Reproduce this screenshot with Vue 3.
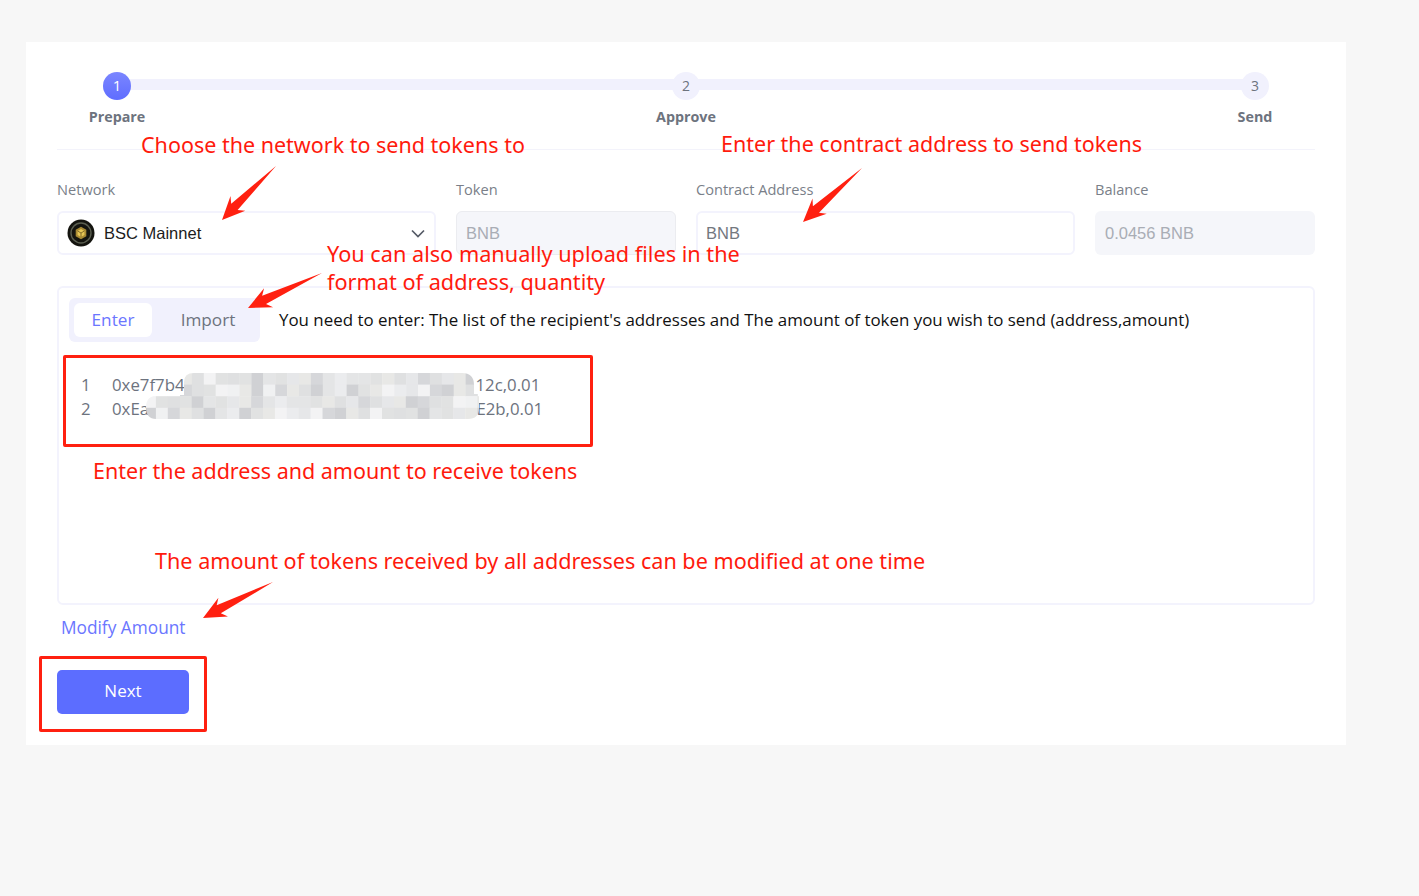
<script setup>
const steps = [
  { n: 1, label: 'Prepare', active: true },
  { n: 2, label: 'Approve' },
  { n: 3, label: 'Send' }
]

function arrow(x1, y1, x2, y2) {
  const dx = x2 - x1, dy = y2 - y1, len = Math.hypot(dx, dy)
  const ux = dx / len, uy = dy / len, nx = -uy, ny = ux
  const pt = (t, w) => `${(x1 + ux * t + nx * w).toFixed(1)},${(y1 + uy * t + ny * w).toFixed(1)}`
  const h = len - 22
  return [pt(0, 0), pt(h + 4, 5), pt(h - 1, 11), pt(len, 0), pt(h - 1, -10), pt(h + 4, -4)].join(' ')
}
const arrows = [
  arrow(276, 166, 222, 220),
  arrow(862, 168, 803, 222),
  arrow(322, 273, 248, 308),
  arrow(273, 582, 203, 618)
]

const shades = ['#ebecee', '#e4e5e6', '#f0f1f2', '#d6d7da', '#e8e8e6', '#dfe0e1', '#f3f3f4', '#d0d1d4', '#e6e7e9', '#e1e2e2']
const cells = []
let seed = 7
for (let r = 0; r < 4; r++) {
  const from = r < 2 ? 180 : 144
  const to = r < 2 ? 476 : 482
  for (let x = from; x < to; x += 11.9) {
    seed = (seed * 31 + 11) % 97
    cells.push({ x, y: 373 + r * 11.6, fill: shades[seed % shades.length] })
  }
}
</script>

<template>
  <div class="page">
    <main class="card">
      <div class="steps">
        <div class="track"></div>
        <div v-for="s in steps" :key="s.n" class="step">
          <span class="dot" :class="{ on: s.active }">{{ s.n }}</span>
          <span class="step-label">{{ s.label }}</span>
        </div>
      </div>

      <div class="fields">
        <div class="field">
          <label>Network</label>
          <div class="box select">
            <svg class="coin" width="28" height="28" viewBox="0 0 28 28">
              <circle cx="14" cy="14" r="13.500" fill="#14140f" />
              <circle cx="14" cy="14" r="10" fill="none" stroke="#5a5e50" stroke-width="1.400" />
              <path d="M14 7.800l5.300 3v6.400L14 20.200l-5.300-3v-6.400z" fill="#a88a33" />
              <path d="M14 10l3.400 2v4L14 18l-3.400-2v-4z" fill="#e6c655" />
              <path d="M14 14v4M10.600 12l3.400 2 3.400-2" fill="none" stroke="#6b5720" stroke-width="0.800" />
            </svg>
            <span class="select-text">BSC Mainnet</span>
            <svg class="chev" width="14" height="9" viewBox="0 0 14 9">
              <path d="M1 1.500l6 6 6-6" fill="none" stroke="#555b66" stroke-width="1.700" />
            </svg>
          </div>
        </div>
        <div class="field">
          <label>Token</label>
          <div class="box disabled bordered">BNB</div>
        </div>
        <div class="field">
          <label>Contract Address</label>
          <div class="box plain">BNB</div>
        </div>
        <div class="field">
          <label>Balance</label>
          <div class="box disabled">0.0456 BNB</div>
        </div>
      </div>

      <section class="panel">
        <div class="panel-head">
          <div class="tabs">
            <span class="tab on">Enter</span>
            <span class="tab">Import</span>
          </div>
          <p class="hint">You need to enter: The list of the recipient's addresses and The amount of token you wish to send (address,amount)</p>
        </div>
        <div class="editor">
          <div class="line"><span class="num">1</span><span class="code">0xe7f7b4<span class="gap1"></span>12c,0.01</span></div>
          <div class="line"><span class="num">2</span><span class="code">0xEa.<span class="gap2"></span>E2b,0.01</span></div>
        </div>
      </section>

      <a class="modify">Modify Amount</a>
      <button class="next" type="button">Next</button>
    </main>

    <svg class="mosaic" width="1419" height="896" viewBox="0 0 1419 896">
      <defs>
        <clipPath id="blur-shape">
          <path d="M194 373H462Q474 373 474 385V394H479V408Q479 419 468 419H156Q146 419 146 407Q146 396 158 395H184V382Q184 373 194 373Z" />
        </clipPath>
      </defs>
      <g clip-path="url(#blur-shape)">
        <rect v-for="(c, i) in cells" :key="i" :x="c.x" :y="c.y" width="12.200" height="12" :fill="c.fill" />
      </g>
      <polygon v-for="(p, i) in arrows" :key="'a' + i" :points="p" fill="#ff2010" />
    </svg>

    <div class="frame frame-a"></div>
    <div class="frame frame-b"></div>

    <span class="note n1">Choose the network to send tokens to</span>
    <span class="note n2">Enter the contract address to send tokens</span>
    <span class="note n3">You can also manually upload files in the<br />format of address, quantity</span>
    <span class="note n4">Enter the address and amount to receive tokens</span>
    <span class="note n5">The amount of tokens received by all addresses can be modified at one time</span>
  </div>
</template>

<style>
html, body { margin: 0; background: #f7f7f7; }
</style>

<style scoped>
.page {
  position: relative;
  height: 896px;
  padding: 42px 73px 0 26px;
  box-sizing: border-box;
  font-family: "Open Sans", "Noto Sans", sans-serif;
  overflow: hidden;
}
.card {
  background: #fff;
  height: 703px;
  padding: 30px 31px 0;
  box-sizing: border-box;
}
.steps {
  position: relative;
  display: flex;
  justify-content: space-between;
  padding-bottom: 22px;
  border-bottom: 1px solid #f3f3fb;
  margin-bottom: 30px;
}
.track {
  position: absolute;
  left: 60px;
  right: 60px;
  top: 7px;
  height: 11px;
  background: #f1f1fd;
}
.step {
  position: relative;
  width: 120px;
  display: flex;
  flex-direction: column;
  align-items: center;
}
.dot {
  width: 28px;
  height: 28px;
  border-radius: 50%;
  background: #f1f1fd;
  color: #6d737e;
  font-size: 14px;
  line-height: 27px;
  text-align: center;
}
.dot.on {
  background: linear-gradient(180deg, #7b86ff, #5f6dff);
  color: #fff;
  font-size: 15px;
}
.step-label {
  margin-top: 7px;
  font-size: 14.300px;
  line-height: 20px;
  font-weight: 700;
  color: #6d737e;
}
.fields {
  display: grid;
  grid-template-columns: 379px 220px 379px 220px;
  column-gap: 20px;
}
.field label {
  display: block;
  font-size: 14.600px;
  line-height: 18px;
  color: #7a7f89;
  margin-bottom: 13px;
}
.box {
  height: 44px;
  box-sizing: border-box;
  border-radius: 6px;
  display: flex;
  align-items: center;
  padding-left: 10px;
  font-family: "Liberation Sans", Arial, sans-serif;
  font-size: 16.500px;
}
.select {
  border: 2px solid #f3f3fd;
  padding: 0 9px 0 8px;
  color: #1c1c1c;
}
.coin { flex: none; margin-right: 9px; }
.select-text { flex: 1; }
.plain {
  border: 2px solid #f3f3fd;
  padding-left: 8px;
  color: #73787f;
}
.disabled {
  background: #f5f6fa;
  color: #a9adb5;
}
.bordered { border: 1px solid #ebecf0; padding-left: 9px; }
.panel {
  margin-top: 31px;
  height: 319px;
  box-sizing: border-box;
  border: 2px solid #f3f3fd;
  border-radius: 6px;
  padding: 10px 10px;
}
.panel-head {
  display: flex;
  align-items: center;
  gap: 19px;
}
.tabs {
  display: flex;
  width: 191px;
  height: 44px;
  box-sizing: border-box;
  padding: 5px;
  background: #f1f1fd;
  border-radius: 6px;
  flex: none;
}
.tab {
  width: 78px;
  text-align: center;
  font-size: 17.200px;
  line-height: 34px;
  color: #6d737e;
  border-radius: 6px;
}
.tab + .tab {
  width: 103px;
  box-sizing: border-box;
  padding-left: 9px;
}
.tab.on {
  background: #fff;
  color: #6b76ff;
}
.hint {
  margin: 0;
  font-size: 16.900px;
  line-height: 24px;
  color: #111;
  white-space: nowrap;
}
.editor {
  margin-top: 31px;
  padding-left: 12px;
  font-size: 16.800px;
  line-height: 24px;
  color: #6d737e;
}
.line { display: flex; }
.num { width: 31px; }
.code { white-space: nowrap; display: flex; }
.gap1 { width: 291px; }
.gap2 { width: 323px; }
.modify {
  display: block;
  margin: 11px 0 0 4px;
  font-size: 17.300px;
  line-height: 24px;
  color: #6b76ff;
}
.next {
  display: block;
  margin-top: 30px;
  width: 132px;
  height: 44px;
  padding: 0 0 3px;
  border: 0;
  border-radius: 5px;
  background: #5c6dff;
  color: #fff;
  font-family: inherit;
  font-size: 17px;
}
.mosaic {
  position: absolute;
  left: 0;
  top: 0;
  pointer-events: none;
}
.frame {
  position: absolute;
  border: 3px solid #ff2010;
  border-radius: 2px;
  box-sizing: border-box;
}
.frame-a { left: 63px; top: 355px; width: 530px; height: 92px; }
.frame-b { left: 39px; top: 656px; width: 168px; height: 76px; }
.note {
  position: absolute;
  font-family: "Noto Sans", "Noto Sans CJK SC", sans-serif;
  font-size: 21.500px;
  line-height: 28px;
  color: #ff1a0d;
  white-space: nowrap;
}
.n1 { left: 141px; top: 131px; }
.n2 { left: 721px; top: 130px; }
.n3 { left: 327px; top: 240px; font-size: 21.700px; }
.n4 { left: 93px; top: 457px; }
.n5 { left: 155px; top: 547px; font-size: 21.600px; }
</style>
